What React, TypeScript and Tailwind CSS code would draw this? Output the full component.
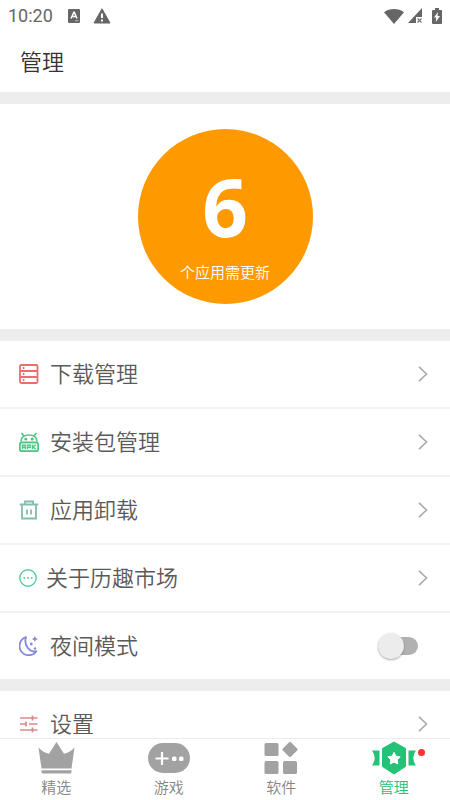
import { ReactNode, useState } from "react";

function StatusBar() {
  return (
    <div className="flex h-8 shrink-0 items-center justify-between px-2 text-[#666]">
      <div className="flex items-center">
        <span className="w-[60px] font-[Roboto,sans-serif] text-[18px] font-normal leading-none">10:20</span>
        <svg className="h-[14px] w-3" viewBox="0 0 12 14">
          <rect width="12" height="14" rx="1" fill="#666" />
          <path d="M3 9.500 5.900 3.300h.4L9 9.500M4.200 7.600h3.800" fill="none" stroke="#fff" strokeWidth="1.500" />
          <path d="M7 11.800h3.500" stroke="#bbb" strokeWidth="1" />
        </svg>
        <svg className="ml-[13px] h-4 w-[18px]" viewBox="0 0 18 16">
          <path d="M9 .8 17 15H1z" fill="#666" stroke="#666" strokeLinejoin="round" />
          <path d="M9 5.500v4.500M9 11.500v2" stroke="#fff" strokeWidth="2" />
        </svg>
      </div>
      <div className="flex items-center">
        <svg className="h-[15px] w-5" viewBox="0 0 20 15">
          <path d="M10 15 0 3.300C5.500-1 14.500-1 20 3.300z" fill="#666" />
        </svg>
        <svg className="ml-[3px] h-4 w-4" viewBox="0 0 16 16">
          <path d="M15 0v9H9v6H1z" fill="#666" />
          <path d="m10.500 10.500 4 4m0-4-4 4" stroke="#777" strokeWidth="1.200" />
        </svg>
        <svg className="ml-[9px] h-4 w-[10px]" viewBox="0 0 10 16">
          <path d="M3 0h4v2h2q1 0 1 1v12q0 1-1 1H1q-1 0-1-1V3q0-1 1-1h2z" fill="#666" />
          <path d="M6 4 2 9.500h2.200L3.800 14 8 8H5.500z" fill="#fff" />
        </svg>
      </div>
    </div>
  );
}

function ListIcon() {
  return (
    <svg className="h-5 w-5" viewBox="0 0 20 20" fill="none" stroke="#ec6d6d" strokeWidth="1.800">
      <rect x="1" y="1" width="17.500" height="18" rx="1.200" />
      <path d="M1 7h17.500M1 13h17.500" />
      <path d="M3.800 4h1.600M3.800 10h1.600M3.800 16h1.600" />
    </svg>
  );
}

function ApkIcon() {
  return (
    <svg className="h-5 w-5" viewBox="0 0 20 20" fill="none" stroke="#4cc585" strokeWidth="1.700">
      <path d="M2 9.500C2 5 5.800 3 10 3s8 2 8 6.500M5.200 4 2.500 1M14.800 4 17.500 1" />
      <circle cx="6.800" cy="7" r=".7" fill="#4cc585" />
      <circle cx="13.200" cy="7" r=".7" fill="#4cc585" />
      <rect x=".8" y="10.300" width="18.400" height="8.900" rx="2" fill="#dff5ea" />
      <path d="M3.500 17v-3.800h2.800V17M3.500 15.300h2.800M8.500 17v-3.800h2.800v2.200H8.500M13.500 12.700V17M16.700 12.800l-2.700 2.100 2.700 2.200" strokeWidth="1.200" />
    </svg>
  );
}

function TrashIcon() {
  return (
    <svg className="h-5 w-5" viewBox="0 0 20 20" fill="none" stroke="#83bcb0" strokeWidth="1.800">
      <path d="M.8 4.500h18.400M6 4V1.500h8V4M3 4.500V18.500h14V4.500M8 9.500v5M12 9.500v5" />
    </svg>
  );
}

function MoreIcon() {
  return (
    <svg className="h-[18px] w-[18px]" viewBox="0 0 18 18">
      <circle cx="9" cy="9" r="8.200" fill="none" stroke="#56d09a" strokeWidth="1.400" />
      <g fill="#56d09a">
        <circle cx="5.300" cy="9" r="1" />
        <circle cx="9" cy="9" r="1" />
        <circle cx="12.700" cy="9" r="1" />
      </g>
    </svg>
  );
}

function MoonIcon() {
  return (
    <svg className="h-5 w-5" viewBox="0 0 20 20" fill="none" stroke="#8589d6" strokeWidth="1.800" strokeLinejoin="round">
      <path d="M7 1.200A9.200 9.200 0 1 0 17.300 15.200C10.500 17 4.500 9 7 1.200z" />
      <g fill="#8589d6" stroke="none">
        <path d="m15.800 0 1 2.100 2.200.9-2.200.9-1 2.100-.9-2.100L12.800 3l2.100-.9z" />
        <circle cx="12.300" cy="8" r="1.400" />
        <circle cx="16" cy="12.500" r="1.200" />
      </g>
    </svg>
  );
}

function SlidersIcon() {
  return (
    <svg className="h-5 w-5" viewBox="0 0 20 20" fill="none" stroke="#d98a8d" strokeWidth="1.700">
      <path d="M1 4h17.500M1 10h6M10 10h8.500M1 16h17.500M13.500 1.500v5M7 7.500v5M13.500 13.500v5" />
    </svg>
  );
}

function Chevron() {
  return (
    <svg className="h-4 w-[10px]" viewBox="0 0 10 16" fill="none" stroke="#aaa" strokeWidth="1.600">
      <path d="m1 .8 7.500 7.200L1 15.200" />
    </svg>
  );
}

function Row({ icon, label, tight }: { icon: ReactNode; label: string; tight?: boolean }) {
  return (
    <a href="#" className="box-content flex h-[66px] items-center justify-between pl-[19px] pr-[22px]">
      <span className={tight ? "flex items-center gap-[9px]" : "flex items-center gap-[11px]"}>
        {icon}
        <span className="pb-1 text-[22px] leading-7">{label}</span>
      </span>
      <Chevron />
    </a>
  );
}

function NightRow() {
  const [night, setNight] = useState(false);
  return (
    <label className="flex h-[66px] items-center justify-between pl-[19px] pr-8">
      <span className="flex items-center gap-[11px]">
        <MoonIcon />
        <span className="pb-1 text-[22px] leading-7">夜间模式</span>
      </span>
      <input
        type="checkbox"
        checked={night}
        onChange={(e) => setNight(e.target.checked)}
        className="flex h-[18px] w-10 appearance-none items-center rounded-full bg-[#b1b1b1] before:size-[26px] before:shrink-0 before:rounded-full before:bg-[#ececec] before:shadow-[0_1px_2px_rgba(0,0,0,0.35)] checked:justify-end checked:bg-[#24c277]"
      />
    </label>
  );
}

function Gap() {
  return <div className="h-3 bg-[#ededed]" />;
}

function CrownIcon() {
  return (
    <svg className="h-8 w-[37px]" viewBox="0 0 37 32" fill="#a2a2a2">
      <path d="M.5 5.500q5 5.500 10.500 6.300L18.500 0 26 11.800Q31.500 11 36.500 5.500L33.500 26.500h-30z" />
      <path d="M3.500 28.300h30V30q0 1.500-1.500 1.500H5Q3.500 31.500 3.500 30z" />
    </svg>
  );
}

function GamepadIcon() {
  return (
    <svg className="h-8 w-[42px]" viewBox="0 0 42 32">
      <rect y="1" width="42" height="30" rx="15" fill="#a2a2a2" />
      <path d="M7.500 16.500h13M14 10v13" stroke="#fff" strokeWidth="2.200" />
      <rect x="24" y="14.500" width="4.500" height="4.500" rx="1.500" fill="#fff" />
      <rect x="31" y="14.500" width="4.500" height="4.500" rx="1.500" fill="#fff" />
    </svg>
  );
}

function AppsIcon() {
  return (
    <svg className="h-8 w-[34px]" viewBox="0 0 34 32" fill="#a2a2a2">
      <rect x=".5" y="1" width="14" height="13" rx="1.500" />
      <rect x=".5" y="19" width="14" height="13" rx="1.500" />
      <rect x="19" y="19" width="14" height="13" rx="1.500" />
      <rect x="20.300" y="1.800" width="11.400" height="11.400" rx="1.300" transform="rotate(45 26 7.500)" />
    </svg>
  );
}

function BadgeIcon() {
  return (
    <svg className="h-[34px] w-[46px]" viewBox="0 0 46 34" fill="#24c277">
      <path d="M23 1 34.500 7.500v18L23 33 11.500 25.500v-18z" stroke="#24c277" strokeLinejoin="round" />
      <path d="M1 9.500h7.500v15H1q2.700-3.500 2.700-7.500T1 9.500zM45 9.500h-7.500v15H45q-2.700-3.500-2.700-7.500T45 9.500z" />
      <path
        d="m23 11.300 1.900 3.900 4.300.6-3.100 3 .7 4.200-3.800-2-3.800 2 .7-4.200-3.100-3 4.300-.6z"
        fill="#fff"
        stroke="#fff"
        strokeLinejoin="round"
      />
    </svg>
  );
}

function Tab({ icon, label, active }: { icon: ReactNode; label: string; active?: boolean }) {
  return (
    <a
      href="#"
      className={`flex flex-1 flex-col items-center text-[15px] leading-5 ${active ? "text-[#24c277]" : "text-[#858585]"}`}
    >
      <span className="relative flex h-[38px] items-center">
        {icon}
        {active && <span className="absolute -right-2 top-[10px] size-[7px] rounded-full bg-[#f93232]" />}
      </span>
      {label}
    </a>
  );
}

export default function App() {
  return (
    <div className="flex h-screen flex-col bg-white font-['Noto_Sans_CJK_SC',sans-serif] font-[350] text-[#5a5a5a]">
      <StatusBar />
      <h1 className="flex h-[60px] shrink-0 items-center px-5 pb-1 text-[22px] font-[350] text-[#333]">管理</h1>

      <main className="min-h-0 flex-1 overflow-y-auto [scrollbar-width:none]">
        <Gap />
        <section className="flex justify-center py-[25px]">
          <button className="flex size-[175px] flex-col items-center rounded-full bg-[#ff9900] pt-[22px] text-white">
            <span className="font-['Open_Sans',sans-serif] text-[80px] font-bold leading-[110px]">6</span>
            <span className="text-[15px] leading-[22px]">个应用需更新</span>
          </button>
        </section>
        <Gap />

        {/* Tools */}
        <div className="divide-y-2 divide-[#f2f2f2]">
          <Row icon={<ListIcon />} label="下载管理" />
          <Row icon={<ApkIcon />} label="安装包管理" />
          <Row icon={<TrashIcon />} label="应用卸载" />
          <Row icon={<MoreIcon />} label="关于历趣市场" tight />
          <NightRow />
        </div>
        <Gap />
        <Row icon={<SlidersIcon />} label="设置" />
      </main>

      {/* Bottom tabs */}
      <nav className="flex h-[62px] shrink-0 border-t border-[#ececec] bg-white">
        <Tab icon={<CrownIcon />} label="精选" />
        <Tab icon={<GamepadIcon />} label="游戏" />
        <Tab icon={<AppsIcon />} label="软件" />
        <Tab icon={<BadgeIcon />} label="管理" active />
      </nav>
    </div>
  );
}
